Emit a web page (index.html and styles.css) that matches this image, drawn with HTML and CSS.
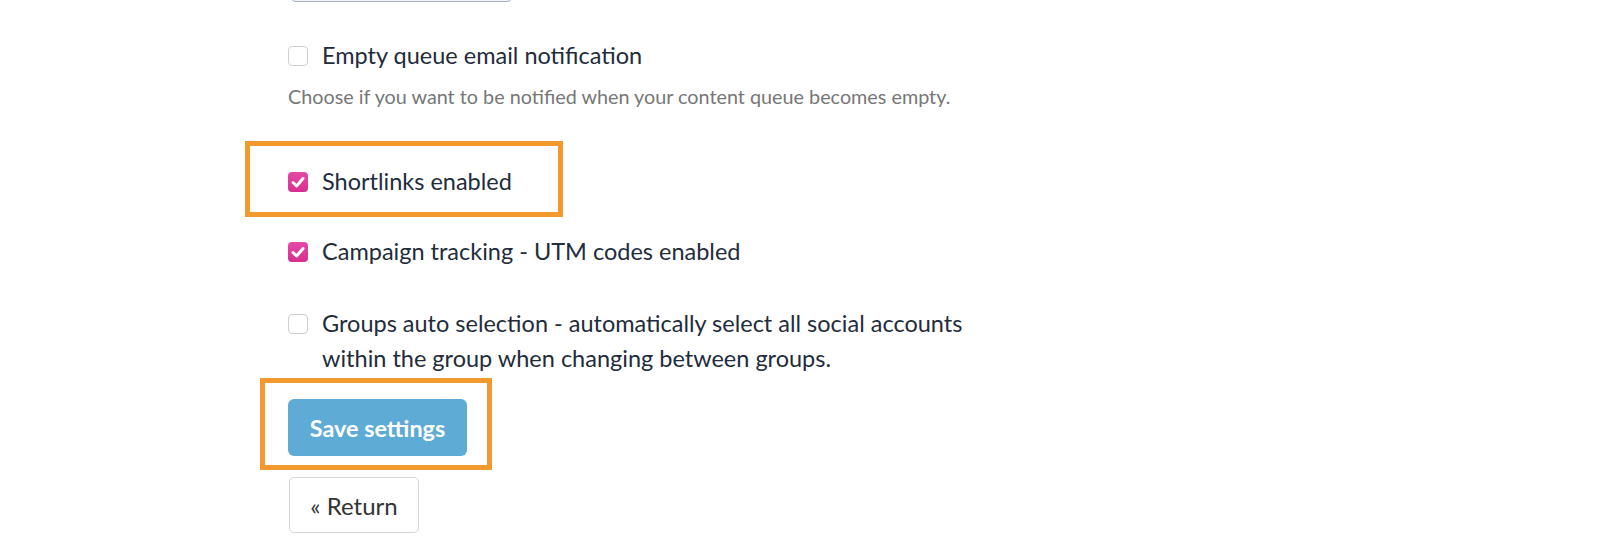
FILE: index.html
```html
<!DOCTYPE html>
<html>
<head>
<meta charset="utf-8">
<link rel="stylesheet" href="styles.css">
</head>
<body>
<div class="page">
  <div class="top-btn"></div>

  <div class="option first">
    <span class="cb"></span>
    <span class="label">Empty queue email notification</span>
  </div>
  <p class="help">Choose if you want to be notified when your content queue becomes empty.</p>

  <div class="highlight hl-short">
    <div class="option">
      <span class="cb checked"><svg viewBox="0 0 20 20" width="20" height="20"><path d="M5 10.5 L8.6 14 L15 6.5" fill="none" stroke="#fff" stroke-width="3" stroke-linecap="round" stroke-linejoin="round"/></svg></span>
      <span class="label">Shortlinks enabled</span>
    </div>
  </div>

  <div class="option campaign">
    <span class="cb checked"><svg viewBox="0 0 20 20" width="20" height="20"><path d="M5 10.5 L8.6 14 L15 6.5" fill="none" stroke="#fff" stroke-width="3" stroke-linecap="round" stroke-linejoin="round"/></svg></span>
    <span class="label">Campaign tracking - UTM codes enabled</span>
  </div>

  <div class="option groups">
    <span class="cb"></span>
    <span class="label">Groups auto selection - automatically select all social accounts<br>within the group when changing between groups.</span>
  </div>

  <div class="highlight hl-save">
    <button class="btn-save">Save settings</button>
  </div>

  <button class="btn-return">« Return</button>
</div>
</body>
</html>
```

FILE: styles.css
```css
html, body {
  margin: 0;
  padding: 0;
  background: #ffffff;
}
body {
  font-family: Lato, "Open Sans", sans-serif;
  color: #2a3342;
  overflow: hidden;
  height: 560px;
}
.page {
  padding-left: 288px;
  display: flex;
  flex-direction: column;
  align-items: flex-start;
}
.top-btn {
  width: 223px;
  height: 50px;
  margin-top: -48px;
  margin-left: 2px;
  border: 1px solid #aab3bf;
  border-radius: 6px;
  background: #eef1f5;
  box-sizing: border-box;
}
.option {
  display: flex;
  align-items: flex-start;
  gap: 14px;
}
.cb {
  flex: none;
  width: 20px;
  height: 20px;
  box-sizing: border-box;
  border: 1px solid #cfcfd3;
  border-radius: 4px;
  background: #fff;
  margin-top: 8px;
  display: flex;
}
.cb.checked {
  border: none;
  background: linear-gradient(#e44aa6, #d62f8f);
}
.label {
  font-size: 23.5px;
  line-height: 35px;
  color: #232c3b;
}
.first {
  margin-top: 36px;
}
.help {
  margin: 10px 0 0 0;
  font-size: 19.8px;
  line-height: 26px;
  color: #777777;
}
.highlight {
  border: 5px solid #f39a2e;
  box-sizing: border-box;
}
.hl-short {
  width: 318px;
  height: 76px;
  margin-top: 32px;
  margin-left: -43px;
  padding: 18px 0 0 38px;
}
.campaign {
  margin-top: 17px;
}
.groups {
  margin-top: 37px;
}
.hl-save {
  width: 232px;
  height: 92px;
  margin-top: 2px;
  margin-left: -28px;
  padding: 16px 0 0 23px;
}
.btn-save {
  width: 179px;
  height: 57px;
  border: none;
  border-radius: 6px;
  background: #5eabd6;
  color: #ffffff;
  font-family: Lato, "Open Sans", sans-serif;
  font-weight: 700;
  font-size: 23.4px;
  padding: 0;
}
.btn-return {
  margin-top: 7px;
  margin-left: 1px;
  width: 130px;
  height: 56px;
  box-sizing: border-box;
  border: 1px solid #d6d6d6;
  border-radius: 5px;
  background: #ffffff;
  color: #333333;
  font-family: Lato, "Open Sans", sans-serif;
  font-size: 24px;
  padding: 0;
}
```
